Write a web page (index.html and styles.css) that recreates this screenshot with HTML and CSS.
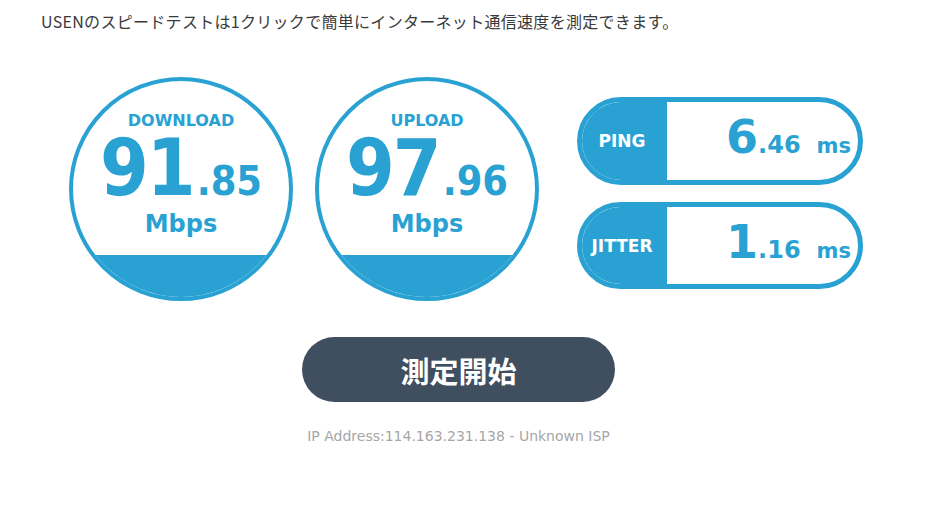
FILE: index.html
```html
<!DOCTYPE html>
<html lang="ja">
<head>
<meta charset="utf-8">
<title>USEN スピードテスト</title>
<link rel="stylesheet" href="styles.css">
</head>
<body>
<p class="intro">USENのスピードテストは1クリックで簡単にインターネット通信速度を測定できます。</p>
<div class="meters">
  <div class="gauge">
    <div class="gauge-label">DOWNLOAD</div>
    <div class="gauge-value"><span class="int">91</span><span class="dec">.85</span></div>
    <div class="gauge-unit">Mbps</div>
    <div class="gauge-fill"></div>
  </div>
  <div class="gauge">
    <div class="gauge-label">UPLOAD</div>
    <div class="gauge-value"><span class="int">97</span><span class="dec">.96</span></div>
    <div class="gauge-unit">Mbps</div>
    <div class="gauge-fill"></div>
  </div>
  <div class="pills">
    <div class="pill">
      <div class="pill-label">PING</div>
      <div class="pill-value"><span class="pint">6</span><span class="pdec">.46</span><span class="punit">ms</span></div>
    </div>
    <div class="pill pill-jitter">
      <div class="pill-label">JITTER</div>
      <div class="pill-value"><span class="pint">1</span><span class="pdec">.16</span><span class="punit">ms</span></div>
    </div>
  </div>
</div>
<div class="actions">
  <button class="start">測定開始</button>
  <p class="ip">IP Address:114.163.231.138 - Unknown ISP</p>
</div>
</body>
</html>
```

FILE: styles.css
```css
html, body {
  margin: 0;
  padding: 0;
  background: #fff;
}
body {
  font-family: "DejaVu Sans", "Noto Sans CJK JP", sans-serif;
  color: #333;
}
.intro {
  margin: 0;
  padding: 10px 0 0 41px;
  font-family: "Noto Sans CJK JP", sans-serif;
  font-size: 16px;
  line-height: 22px;
  letter-spacing: 0.3px;
  color: #3a3a3a;
}
.meters {
  display: flex;
  align-items: flex-start;
  margin: 45px 0 0 69px;
}
.gauge {
  box-sizing: border-box;
  width: 224px;
  height: 224px;
  border: 4px solid #29a2d3;
  border-radius: 50%;
  overflow: hidden;
  display: flex;
  flex-direction: column;
  align-items: center;
  color: #29a2d3;
  font-weight: bold;
}
.gauge + .gauge {
  margin-left: 22px;
}
.gauge-label {
  margin-top: 30px;
  font-size: 16px;
  line-height: 20px;
}
.gauge-value {
  margin-top: 5px;
  height: 64px;
  line-height: 64px;
  white-space: nowrap;
  font-family: "DejaVu Sans Condensed", "DejaVu Sans", sans-serif;
  font-stretch: condensed;
}
.gauge-value .int {
  font-size: 78px;
  letter-spacing: -2px;
}
.gauge-value .dec {
  font-size: 41px;
  margin-left: 3px;
}
.gauge-unit {
  margin-top: 10px;
  font-size: 24px;
  line-height: 28px;
}
.gauge-fill {
  margin-top: auto;
  align-self: stretch;
  height: 42px;
  background: #29a2d3;
}
.pills {
  margin: 20px 0 0 38px;
  display: flex;
  flex-direction: column;
  gap: 17px;
}
.pill {
  box-sizing: border-box;
  width: 286px;
  height: 88px;
  border: 5px solid #29a2d3;
  border-radius: 44px;
  overflow: hidden;
  display: flex;
}
.pill-jitter {
  height: 87px;
}
.pill-label {
  width: 85px;
  background: #29a2d3;
  color: #fff;
  font-weight: bold;
  font-size: 17px;
  display: flex;
  align-items: center;
  justify-content: center;
  padding-right: 5px;
  box-sizing: border-box;
}
.pill-value {
  flex: 1;
  display: flex;
  align-items: baseline;
  justify-content: flex-end;
  padding: 15px 7px 0 0;
  color: #29a2d3;
  font-weight: bold;
  line-height: 40px;
}
.pint {
  font-size: 46px;
}
.pdec {
  font-size: 24px;
}
.punit {
  font-size: 21px;
  margin-left: 16px;
}
.actions {
  margin: 36px 0 0 302px;
  width: 313px;
  text-align: center;
}
.start {
  display: block;
  width: 313px;
  height: 65px;
  border: none;
  border-radius: 33px;
  background: #404f60;
  color: #fff;
  font-family: "Noto Sans CJK JP", sans-serif;
  font-weight: bold;
  font-size: 29px;
  padding: 0;
}
.ip {
  margin: 26px 0 0;
  font-size: 14px;
  line-height: 16px;
  color: #a6a6a6;
}
```
